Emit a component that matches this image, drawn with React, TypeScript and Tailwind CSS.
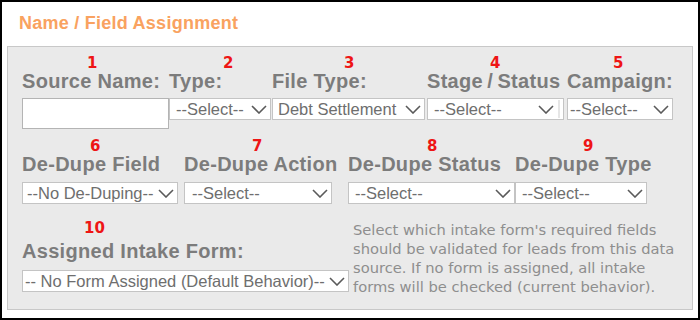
import React from "react";

const Chevron = () => (
  <svg width="16" height="9" viewBox="0 0 16 9" className="shrink-0">
    <path d="M1 1 L8 8 L15 1" fill="none" stroke="#5a5a5a" strokeWidth="1.6" />
  </svg>
);

type SelProps = { w: string; pl: string; text: string; bar?: boolean };

const Sel = ({ w, pl, text, bar }: SelProps) => (
  <div
    className={`${w} ${pl} h-[22px] border border-[#c4c4c4] bg-white flex items-center justify-between pr-[3px] text-[16.5px] leading-[20px] text-[#6e6e6e] whitespace-nowrap overflow-hidden`}
    style={{ fontFamily: '"Liberation Sans", Arial, sans-serif' }}
  >
    <span>{text}</span>
    <div className="flex items-center">
      <Chevron />
      {bar ? <div className="ml-[4px] w-[2px] h-[18px] bg-[#e6e6e6]" /> : null}
    </div>
  </div>
);

const Num = ({ ml, n }: { ml: string; n: string }) => (
  <div
    className={`${ml} h-[15px] text-[15px] leading-[15px] font-bold text-[#ee1515]`}
    style={{ fontFamily: '"DejaVu Sans", Verdana, sans-serif' }}
  >
    {n}
  </div>
);

const Label = ({ text }: { text: string }) => (
  <div className="h-[20px] text-[20px] leading-[20px] font-bold text-[#7c7c7c] tracking-[0.3px] whitespace-nowrap">
    {text}
  </div>
);

export default function App() {
  return (
    <div
      className="w-[700px] h-[320px] border-2 border-black bg-white overflow-hidden"
      style={{ fontFamily: '"Liberation Sans", Arial, sans-serif' }}
    >
      <div className="pl-[17px] pt-[10px] h-[22px] box-content text-[18px] leading-[22px] font-bold text-[#f9a260] tracking-[0.25px]">
        Name / Field Assignment
      </div>
      <div className="ml-[5px] mt-[12px] w-[686px] h-[264px] border border-[#c8c8c8] bg-[#eaeaea] pl-[14px] pt-[9px]">
        {/* Row 1 */}
        <div className="flex items-start">
          <div className="flex flex-col w-[147px]">
            <Num ml="ml-[65px]" n="1" />
            <Label text="Source Name:" />
            <div className="mt-[7px] w-[147px] h-[31px] border border-[#b4b4b4] bg-white" />
          </div>
          <div className="flex flex-col w-[102px]">
            <Num ml="ml-[54px]" n="2" />
            <Label text="Type:" />
            <div className="mt-[7px]">
              <Sel w="w-[102px]" pl="pl-[6px]" text="--Select--" />
            </div>
          </div>
          <div className="flex flex-col w-[153px] ml-[1px]">
            <Num ml="ml-[72px]" n="3" />
            <Label text="File Type:" />
            <div className="mt-[7px]">
              <Sel w="w-[153px]" pl="pl-[5px]" text="Debt Settlement" />
            </div>
          </div>
          <div className="flex flex-col w-[137px] ml-[2px]">
            <Num ml="ml-[63px]" n="4" />
            <Label text={"Stage\u2009/\u2009Status"} />
            <div className="mt-[7px]">
              <Sel w="w-[137px]" pl="pl-[6px]" text="--Select--" bar />
            </div>
          </div>
          <div className="flex flex-col w-[106px] ml-[3px]">
            <Num ml="ml-[46px]" n="5" />
            <Label text="Campaign:" />
            <div className="mt-[7px]">
              <Sel w="w-[106px]" pl="pl-[2px]" text="--Select--" />
            </div>
          </div>
        </div>

        {/* Row 2 */}
        <div className="flex items-start mt-[10px]">
          <div className="flex flex-col w-[156px]">
            <Num ml="ml-[68px]" n="6" />
            <Label text="De-Dupe Field" />
            <div className="mt-[8px]">
              <Sel w="w-[156px]" pl="pl-[4px]" text="--No De-Duping--" />
            </div>
          </div>
          <div className="flex flex-col w-[148px] ml-[6px]">
            <Num ml="ml-[68px]" n="7" />
            <Label text="De-Dupe Action" />
            <div className="mt-[8px]">
              <Sel w="w-[148px]" pl="pl-[7px]" text="--Select--" />
            </div>
          </div>
          <div className="flex flex-col w-[167px] ml-[16px]">
            <Num ml="ml-[79px]" n="8" />
            <Label text="De-Dupe Status" />
            <div className="mt-[8px]">
              <Sel w="w-[167px]" pl="pl-[6px]" text="--Select--" />
            </div>
          </div>
          <div className="flex flex-col w-[132px]">
            <Num ml="ml-[68px]" n="9" />
            <Label text="De-Dupe Type" />
            <div className="mt-[8px]">
              <Sel w="w-[132px]" pl="pl-[6px]" text="--Select--" />
            </div>
          </div>
        </div>

        {/* Row 3 */}
        <div className="flex items-start mt-[16px]">
          <div className="flex flex-col w-[327px] pt-[1px]">
            <Num ml="ml-[62px]" n="10" />
            <div className="mt-[5px]">
              <Label text="Assigned Intake Form:" />
            </div>
            <div className="mt-[9px]">
              <Sel w="w-[327px]" pl="pl-[2px]" text="-- No Form Assigned (Default Behavior)--" />
            </div>
          </div>
          <div
            className="ml-[4px] text-[14.7px] leading-[19px] text-[#8e8e8e] whitespace-nowrap"
            style={{ fontFamily: '"DejaVu Sans", Verdana, sans-serif' }}
          >
            Select which intake form's required fields
            <br />
            should be validated for leads from this data
            <br />
            source. If no form is assigned, all intake
            <br />
            forms will be checked (current behavior).
          </div>
        </div>
      </div>
    </div>
  );
}
